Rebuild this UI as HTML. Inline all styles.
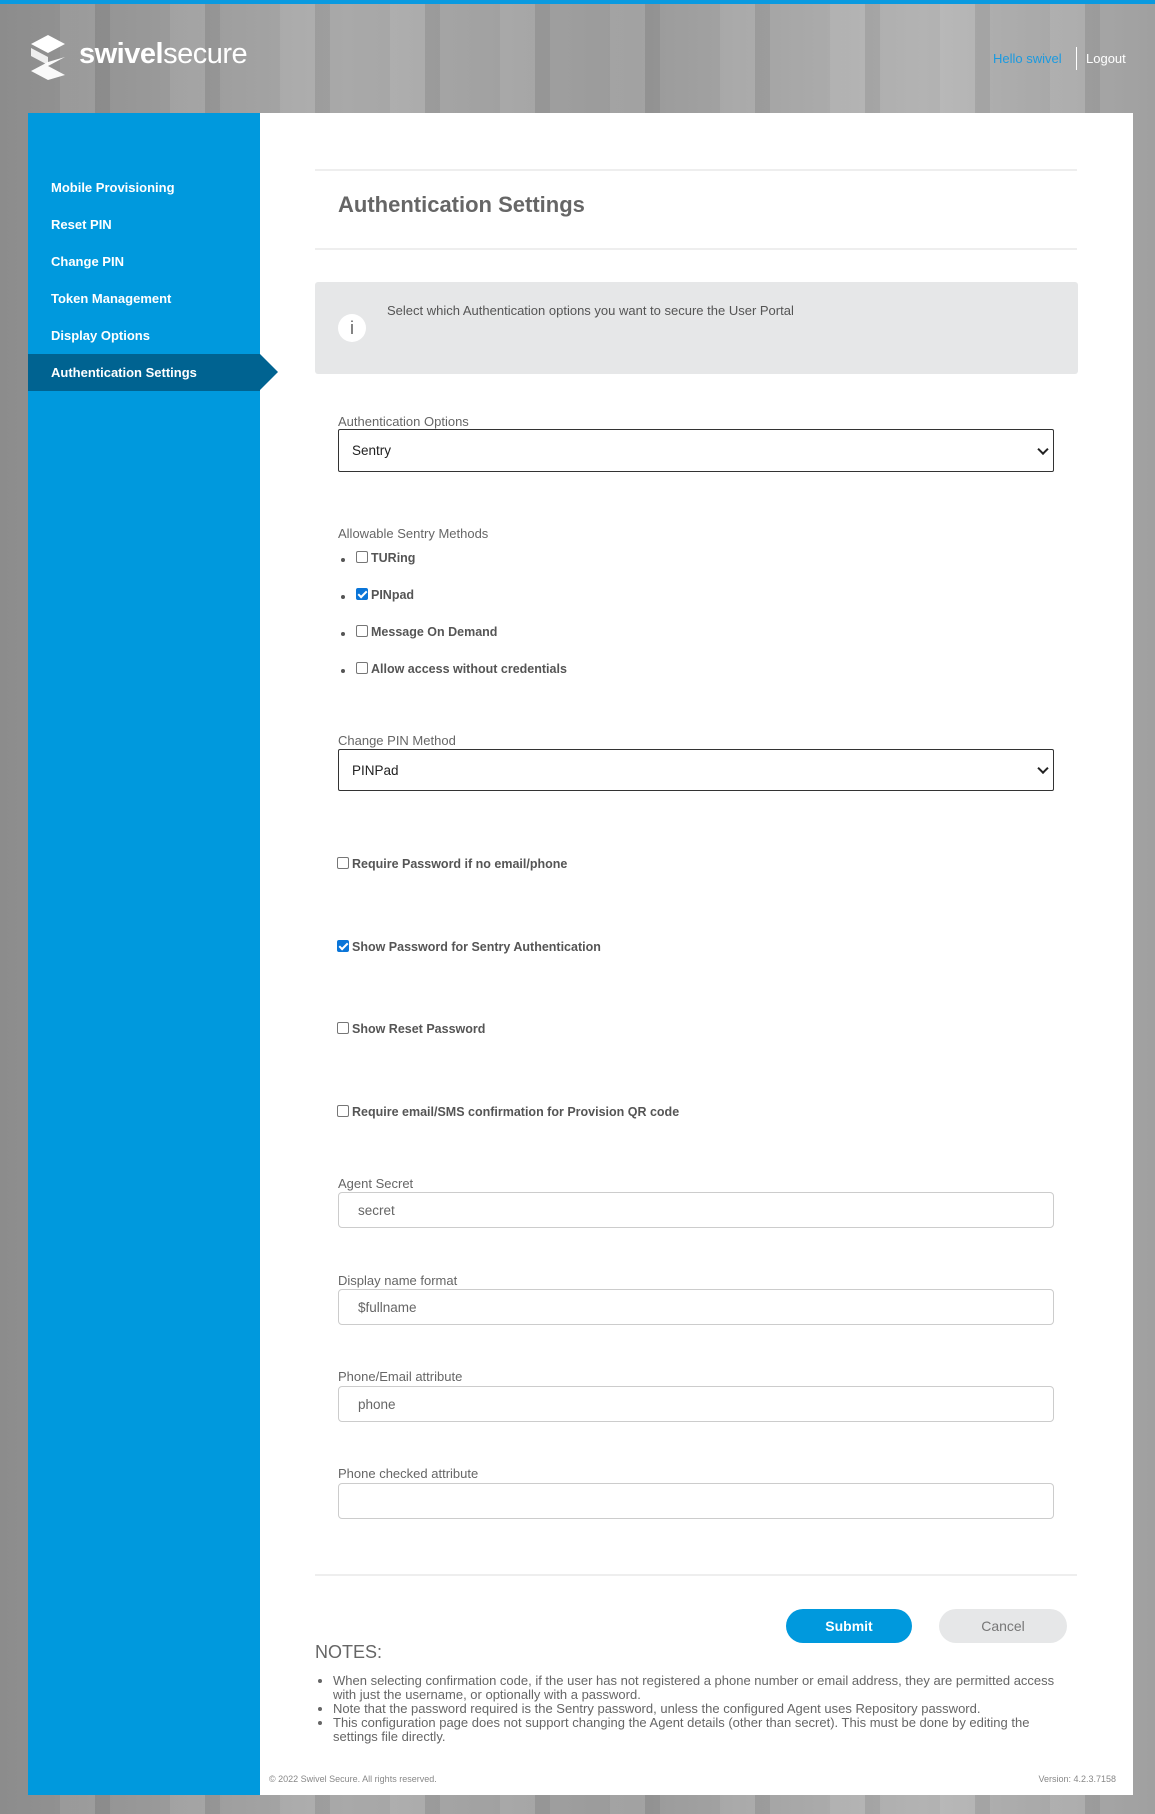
<!DOCTYPE html>
<html><head><meta charset="utf-8"><style>
*{box-sizing:border-box;margin:0;padding:0}
body{width:1155px;height:1814px;position:relative;font-family:"Liberation Sans",sans-serif;overflow:hidden;
background:linear-gradient(90deg,#8c8c8c 0%,#a9a9a9 30%,#9a9a9a 55%,#b3b3b3 80%,#a0a0a0 100%);}
.bg{position:absolute;inset:0;background:repeating-linear-gradient(90deg,rgba(255,255,255,0) 0 60px,rgba(255,255,255,.08) 60px 95px,rgba(0,0,0,.06) 95px 110px);}
.topbar{position:absolute;left:0;top:0;width:1155px;height:4px;background:#0a9ae0}
.abs{position:absolute}
.side{left:28px;top:113px;width:232px;height:1682px;background:#0099dd}
.main{left:260px;top:113px;width:873px;height:1682px;background:#fff}
.nav{position:absolute;left:51px;color:#fff;font-size:13px;font-weight:bold}
.act{left:28px;top:354px;width:232px;height:37px;background:#006391}
.arr{left:260px;top:354px;width:0;height:0;border-top:18.5px solid transparent;border-bottom:18.5px solid transparent;border-left:18px solid #006391}
.hr{position:absolute;left:315px;width:762px;height:2px;background:#eeeeee}
.lbl{position:absolute;left:338px;font-size:13px;color:#666}
.sel{position:absolute;left:338px;width:716px;border:1px solid #333;border-radius:2px;font-size:13.5px;color:#222;padding-left:13px;display:flex;align-items:center}
.sel:after{content:"";position:absolute;right:6px;top:50%;width:6px;height:6px;border-right:2px solid #222;border-bottom:2px solid #222;transform:translateY(-70%) rotate(45deg)}
.inp{position:absolute;left:338px;width:716px;height:36px;border:1px solid #ccc;border-radius:4px;font-size:13.5px;color:#666;padding-left:19px;display:flex;align-items:center}
.cb{display:inline-block;width:12px;height:12px;border:1px solid #767676;border-radius:2px;background:#fff;vertical-align:-1px;margin-right:3px;position:relative}
.cb.on{background:#0a75d8;border-color:#0a75d8}
.cb.on:after{content:"";position:absolute;left:3px;top:0px;width:3px;height:7px;border-right:2px solid #fff;border-bottom:2px solid #fff;transform:rotate(45deg)}
.ck{position:absolute;font-size:12.5px;font-weight:bold;color:#555}
.dot{position:absolute;left:341px;width:4px;height:4px;border-radius:50%;background:#555}
.btn{position:absolute;top:1609px;height:34px;border-radius:17px;font-size:14px;display:flex;align-items:center;justify-content:center}
.notes{position:absolute;left:319px;top:1674px;width:745px;font-size:13px;color:#666;line-height:14px}
.notes li{margin-left:14px;padding-left:0}
</style></head><body>
<div class="bg"></div>
<div class="topbar"></div>
<svg class="abs" style="left:27px;top:35px" width="42" height="45" viewBox="0 0 42 45">
<g fill="#fff"><path d="M21 0 L38 9 L21 18 L4 9Z"/><path d="M4 13 L21 22 L21 30 L4 21Z" opacity=".85"/><path d="M38 22 L21 31 L38 40 L21 45 L4 36 L21 27Z" opacity=".95"/></g></svg>
<div class="abs" style="left:79px;top:38px;font-size:29px;color:#fff;letter-spacing:-0.5px"><b>swivel</b>secure</div>
<div class="abs" style="left:993px;top:51px;font-size:13px;color:#1a9ae0">Hello swivel</div>
<div class="abs" style="left:1076px;top:47px;width:1px;height:23px;background:#fff"></div>
<div class="abs" style="left:1086px;top:51px;font-size:13px;color:#fff">Logout</div>

<div class="abs side"></div>
<div class="abs main"></div>
<div class="abs act"></div>
<div class="abs arr"></div>
<div class="nav" style="top:180px">Mobile Provisioning</div>
<div class="nav" style="top:217px">Reset PIN</div>
<div class="nav" style="top:254px">Change PIN</div>
<div class="nav" style="top:291px">Token Management</div>
<div class="nav" style="top:328px">Display Options</div>
<div class="nav" style="top:365px">Authentication Settings</div>

<div class="hr" style="top:169px"></div>
<div class="abs" style="left:338px;top:192px;font-size:22px;color:#666;font-weight:600">Authentication Settings</div>
<div class="hr" style="top:248px"></div>
<div class="abs" style="left:315px;top:282px;width:763px;height:92px;background:#e6e7e8;border-radius:3px"></div>
<div class="abs" style="left:338px;top:314px;width:28px;height:28px;border-radius:50%;background:#fff;color:#666;font-size:18px;text-align:center;line-height:28px">i</div>
<div class="abs" style="left:387px;top:303px;font-size:13px;color:#555">Select which Authentication options you want to secure the User Portal</div>

<div class="lbl" style="top:414px">Authentication Options</div>
<div class="sel" style="top:429px;height:43px">Sentry</div>
<div class="lbl" style="top:526px">Allowable Sentry Methods</div>
<div class="dot" style="top:558px"></div><div class="ck" style="left:356px;top:551px"><span class="cb"></span>TURing</div>
<div class="dot" style="top:595px"></div><div class="ck" style="left:356px;top:588px"><span class="cb on"></span>PINpad</div>
<div class="dot" style="top:632px"></div><div class="ck" style="left:356px;top:625px"><span class="cb"></span>Message On Demand</div>
<div class="dot" style="top:669px"></div><div class="ck" style="left:356px;top:662px"><span class="cb"></span>Allow access without credentials</div>
<div class="lbl" style="top:733px">Change PIN Method</div>
<div class="sel" style="top:749px;height:42px">PINPad</div>
<div class="ck" style="left:337px;top:857px"><span class="cb"></span>Require Password if no email/phone</div>
<div class="ck" style="left:337px;top:940px"><span class="cb on"></span>Show Password for Sentry Authentication</div>
<div class="ck" style="left:337px;top:1022px"><span class="cb"></span>Show Reset Password</div>
<div class="ck" style="left:337px;top:1105px"><span class="cb"></span>Require email/SMS confirmation for Provision QR code</div>
<div class="lbl" style="top:1176px">Agent Secret</div>
<div class="inp" style="top:1192px">secret</div>
<div class="lbl" style="top:1273px">Display name format</div>
<div class="inp" style="top:1289px">$fullname</div>
<div class="lbl" style="top:1369px">Phone/Email attribute</div>
<div class="inp" style="top:1386px">phone</div>
<div class="lbl" style="top:1466px">Phone checked attribute</div>
<div class="inp" style="top:1483px"></div>
<div class="hr" style="top:1574px"></div>
<div class="btn" style="left:786px;width:126px;background:#0099dd;color:#fff;font-weight:bold">Submit</div>
<div class="btn" style="left:939px;width:128px;background:#e6e7e8;color:#777">Cancel</div>
<div class="abs" style="left:315px;top:1642px;font-size:18px;color:#666">NOTES:</div>
<ul class="notes">
<li>When selecting confirmation code, if the user has not registered a phone number or email address, they are permitted access with just the username, or optionally with a password.</li>
<li>Note that the password required is the Sentry password, unless the configured Agent uses Repository password.</li>
<li>This configuration page does not support changing the Agent details (other than secret). This must be done by editing the settings file directly.</li>
</ul>
<div class="abs" style="left:269px;top:1774px;font-size:9px;color:#888">© 2022 Swivel Secure. All rights reserved.</div>
<div class="abs" style="left:1030px;top:1774px;width:86px;text-align:right;font-size:9px;color:#888">Version: 4.2.3.7158</div>
</body></html>
